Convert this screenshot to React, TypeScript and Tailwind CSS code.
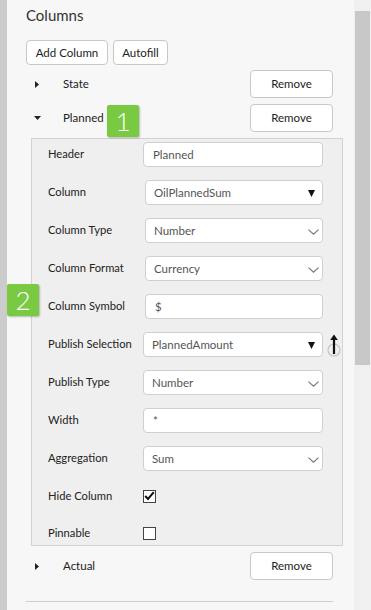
import type { ReactNode } from 'react';

const font = { fontFamily: 'Lato, "Open Sans", sans-serif' };

function Caret({ open = false }: { open?: boolean }) {
  return open ? (
    <svg width="7" height="4" viewBox="0 0 7 4" className="block">
      <path d="M0 0 H7 L3.5 4 Z" fill="#222" />
    </svg>
  ) : (
    <svg width="4" height="7" viewBox="0 0 4 7" className="block">
      <path d="M0 0 V7 L4 3.5 Z" fill="#222" />
    </svg>
  );
}

function Badge({ n, className = '' }: { n: string; className?: string }) {
  return (
    <div
      className={`absolute flex h-[32px] w-[32px] items-center justify-center rounded-[2px] bg-[#7ac943] text-[26px] font-light leading-none text-white shadow-[1px_1px_2px_rgba(0,0,0,0.25)] ${className}`}
    >
      {n}
    </div>
  );
}

function ColumnRow({ name, open = false, children }: { name: string; open?: boolean; children?: ReactNode }) {
  return (
    <div className="relative flex h-[28px] items-center">
      <div className={`w-[37px] ${open ? 'pl-[8px]' : 'pl-[9px]'}`}>
        <Caret open={open} />
      </div>
      <span className="text-[11.5px] text-[#222]">{name}</span>
      {children}
      <button className="ml-auto flex h-[28px] w-[83px] items-center justify-center rounded-[4px] border border-[#c8c8c8] bg-white text-[11.5px] text-[#222]">
        Remove
      </button>
    </div>
  );
}

function Chevron() {
  return (
    <svg width="11" height="6" viewBox="0 0 11 6" className="absolute right-[3px] top-[10px]">
      <path d="M0.5 0.6 L5.5 5.2 L10.5 0.6" fill="none" stroke="#777" strokeWidth="1.2" />
    </svg>
  );
}

function SolidArrow() {
  return (
    <svg width="7" height="7" viewBox="0 0 7 7" className="absolute right-[7px] top-[9px]">
      <path d="M0 0 H7 L3.5 7 Z" fill="#111" />
    </svg>
  );
}

function Field({
  label,
  value,
  kind,
  shift = false,
  extra,
}: {
  label: string;
  value: string;
  kind: 'input' | 'select' | 'dropdown';
  shift?: boolean;
  extra?: ReactNode;
}) {
  return (
    <div className="flex h-[25px] items-center">
      <div className="w-[95px] text-[11.2px] text-[#222]">{label}</div>
      <div
        className={`relative flex h-[25px] items-center rounded-[4px] border border-[#cfcfcf] bg-white text-[11.5px] text-[#555] ${
          shift ? 'ml-[2px] w-[178px]' : 'w-[180px]'
        }`}
      >
        <span className={kind === 'input' ? 'pl-[9px]' : 'pl-[8px]'}>{value}</span>
        {kind === 'select' && <Chevron />}
        {kind === 'dropdown' && <SolidArrow />}
      </div>
      {extra}
    </div>
  );
}

function Check({ checked }: { checked?: boolean }) {
  return (
    <div className="flex h-[13px] w-[13px] items-center justify-center border border-[#444] bg-white">
      {checked && (
        <svg width="11" height="10" viewBox="0 0 11 10">
          <path d="M1.2 5 L4 8 L9.8 1.2" fill="none" stroke="#111" strokeWidth="2" />
        </svg>
      )}
    </div>
  );
}

function CheckField({ label, checked }: { label: string; checked?: boolean }) {
  return (
    <div className="flex h-[24px] items-center">
      <div className="w-[95px] text-[11.2px] text-[#222]">{label}</div>
      <Check checked={checked} />
    </div>
  );
}

function PublishIcon() {
  return (
    <svg width="14" height="26" viewBox="0 0 14 26" className="ml-[4px] mt-[2px]">
      <circle cx="7" cy="17" r="6" fill="none" stroke="#c4c4c4" strokeWidth="1.2" />
      <path d="M7 21 V5" stroke="#111" strokeWidth="2.2" />
      <path d="M3.2 7 L7 1.5 L10.8 7 Z" fill="#111" />
    </svg>
  );
}

export default function App() {
  return (
    <div className="flex h-[610px] w-[371px] overflow-hidden bg-[#f7f7f7]" style={font}>
      <div className="w-[7px] shrink-0 bg-[#cccccc]" />
      <div className="relative flex-1 pl-[19px] pr-[21px] pt-[5px]">
        <h2 className="h-[21px] text-[15px] leading-[21px] text-[#333]">Columns</h2>

        <div className="mt-[14px] flex gap-[5px]">
          <button className="flex h-[25px] w-[82px] items-center justify-center rounded-[4px] border border-[#c8c8c8] bg-white text-[11.5px] text-[#222]">
            Add Column
          </button>
          <button className="flex h-[25px] w-[55px] items-center justify-center rounded-[4px] border border-[#c8c8c8] bg-white text-[11.5px] text-[#222]">
            Autofill
          </button>
        </div>

        <div className="mt-[5px] flex flex-col gap-[6px]">
          <ColumnRow name="State" />
          <ColumnRow name="Planned" open>
            <Badge n="1" className="left-[81px] top-[1px]" />
          </ColumnRow>

          <div className="ml-[5px] mr-[-10px] flex flex-col gap-[13px] border border-[#d2d2d2] bg-[#efefef] pl-[16px] pt-[3px]">
            <Field label="Header" value="Planned" kind="input" />
            <Field label="Column" value="OilPlannedSum" kind="dropdown" shift />
            <Field label="Column Type" value="Number" kind="select" shift />
            <Field label="Column Format" value="Currency" kind="select" shift />
            <Field label="Column Symbol" value="$" kind="input" shift />
            <Field label="Publish Selection" value="PlannedAmount" kind="dropdown" extra={<PublishIcon />} />
            <Field label="Publish Type" value="Number" kind="select" />
            <Field label="Width" value="*" kind="input" />
            <Field label="Aggregation" value="Sum" kind="select" />
            <CheckField label="Hide Column" checked />
            <CheckField label="Pinnable" />
          </div>

          <ColumnRow name="Actual" />
        </div>

        <div className="mt-[21px] h-px bg-[#cfcfcf]" />

        <Badge n="2" className="left-0 top-[284px]" />
      </div>
      <div className="w-[17px] shrink-0 bg-[#f0f0f0] pl-[1px] pt-[11px]">
        <div className="h-[354px] w-[15px] bg-[#c8c8c8]" />
      </div>
    </div>
  );
}
